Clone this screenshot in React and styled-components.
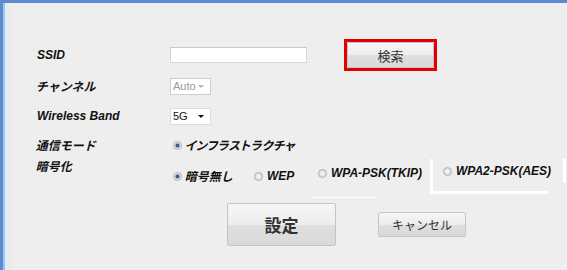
import React from "react";
import styled, { createGlobalStyle } from "styled-components";

const Global = createGlobalStyle`
  html, body { margin: 0; padding: 0; background: #eeeeee; }
  body { font-family: "Liberation Sans", Arial, "Noto Sans CJK JP", sans-serif; }
`;

const Page = styled.div`
  width: 567px;
  height: 270px;
  box-sizing: border-box;
  border-top: 3px solid #5b8cd1;
  background: linear-gradient(
    to right,
    #5b8cd1 0 3px,
    #a9c3e8 3px 5px,
    #e4ecf5 5px 10px,
    #f3ebea 10px 14px,
    #eeeeee 14px
  );
  padding: 36px 0 0 37px;
  overflow: hidden;
`;

const Row = styled.div`
  display: flex;
  align-items: ${(p) => p.$align || "center"};
  height: ${(p) => p.$h}px;
`;

const Label = styled.div`
  width: 133px;
  flex: none;
  font: italic bold 12px/14px "Liberation Sans", Arial, "Noto Sans CJK JP", sans-serif;
  color: #111;
`;

const Jp = styled.span`
  display: inline-block;
  font-family: "Noto Sans CJK JP", sans-serif;
  font-style: normal;
  font-weight: bold;
  transform: skewX(-14deg);
  font-feature-settings: ${(p) => (p.$palt ? '"palt"' : "normal")};
  letter-spacing: ${(p) => (p.$palt ? "0.3px" : "0")};
`;

const TextInput = styled.div`
  width: 135px;
  height: 14px;
  background: #fff;
  border: 1px solid #d6d6d6;
  border-top-color: #c8c8c8;
`;

const RedFrame = styled.div`
  margin-left: 37px;
  width: 87px;
  height: 26px;
  border: 3px solid #e00000;
  display: flex;
`;

const GrayButton = styled.div`
  flex: ${(p) => (p.$w ? "none" : "1")};
  box-sizing: border-box;
  border: 1px solid #c4c4c4;
  background: linear-gradient(to bottom, #f6f6f6 0%, #ededed 50%, #dfdfdf 51%, #d9d9d9 100%);
  display: flex;
  align-items: center;
  justify-content: center;
  font: ${(p) => (p.$bold ? "bold" : "normal")} ${(p) => p.$size || 13}px "Noto Sans CJK JP", sans-serif;
  color: #333;
  width: ${(p) => (p.$w ? p.$w + "px" : "auto")};
  height: ${(p) => (p.$hh ? p.$hh + "px" : "auto")};
  border-radius: 2px;
`;

const Select = styled.div`
  width: 37px;
  height: 15px;
  box-sizing: content-box;
  border: 1px solid ${(p) => (p.$disabled ? "#cfcfcf" : "#dcdcdc")};
  background: #fff;
  display: flex;
  align-items: center;
  justify-content: space-between;
  padding: 0 0 0 2px;
  font: 11px "Liberation Sans", Arial, sans-serif;
  color: ${(p) => (p.$disabled ? "#9a9a9a" : "#111")};
`;

const Caret = styled.span`
  width: 0;
  height: 0;
  margin-right: 6px;
  border-left: 3px solid transparent;
  border-right: 3px solid transparent;
  border-top: 3px solid ${(p) => (p.$disabled ? "#b5b5b5" : "#111")};
`;

const Radio = styled.span`
  width: 7px;
  height: 7px;
  flex: none;
  border-radius: 50%;
  border: 1px solid #a9b3bd;
  background: ${(p) =>
    p.$checked
      ? "radial-gradient(circle, #3f5f8c 0 1.8px, #dfe6ee 2.4px)"
      : "radial-gradient(circle, #f2f2f2 0 1.5px, #dcdcdc 3px)"};
  margin-right: 4px;
`;

const OptionText = styled.span`
  font: italic bold 12px/14px "Liberation Sans", Arial, "Noto Sans CJK JP", sans-serif;
  color: #111;
  white-space: nowrap;
`;

const Options = styled.div`
  display: flex;
  align-items: stretch;
  height: 35px;
`;

const Cell = styled.div`
  position: relative;
  display: flex;
  align-items: flex-start;
  box-sizing: border-box;
  width: ${(p) => p.$w}px;
  padding-left: ${(p) => p.$pl || 0}px;
  padding-top: ${(p) => p.$pt || 0}px;
  border-left: ${(p) => (p.$leftLine ? "3px solid #fff" : "none")};
  border-bottom: ${(p) => (p.$bottomLine ? "3px solid #fff" : "none")};
  ${(p) => p.$short && `
    &::after {
      content: "";
      position: absolute;
      left: -2px;
      bottom: -4px;
      width: 67px;
      height: 1px;
      background: #fff;
    }
  `}
`;

const Stub = styled.div`
  width: 0;
  height: 24px;
  margin-left: 15px;
  border-left: 3px solid #fff;
`;

const OptionItem = styled.div`
  display: flex;
  align-items: center;
  margin-left: ${(p) => p.$ml || 0}px;
`;

const Buttons = styled.div`
  display: flex;
  align-items: center;
  gap: 42px;
  margin: 7px 0 0 190px;
`;

export default function App() {
  return (
    <>
      <Global />
      <Page>
        <Row $h={32}>
          <Label>SSID</Label>
          <TextInput />
          <RedFrame>
            <GrayButton>検索</GrayButton>
          </RedFrame>
        </Row>
        <Row $h={30}>
          <Label>
            <Jp>チャンネル</Jp>
          </Label>
          <Select $disabled>
            Auto
            <Caret $disabled />
          </Select>
        </Row>
        <Row $h={30}>
          <Label>Wireless Band</Label>
          <Select>
            5G
            <Caret />
          </Select>
        </Row>
        <Row $h={28}>
          <Label>
            <Jp>通信モード</Jp>
          </Label>
          <OptionItem $ml={3}>
            <Radio $checked />
            <OptionText>
              <Jp $palt>インフラストラクチャ</Jp>
            </OptionText>
          </OptionItem>
        </Row>
        <Row $h={37} $align="flex-start">
          <Label>
            <Jp>暗号化</Jp>
          </Label>
          <Options>
            <Cell $w={80} $pl={3} $pt={10}>
              <OptionItem>
                <Radio $checked />
                <OptionText>
                  <Jp>暗号無し</Jp>
                </OptionText>
              </OptionItem>
            </Cell>
            <Cell $w={62} $pl={4} $pt={10}>
              <OptionItem>
                <Radio />
                <OptionText>WEP</OptionText>
              </OptionItem>
            </Cell>
            <Cell $w={118} $pl={6} $pt={7} $short>
              <OptionItem>
                <Radio />
                <OptionText>WPA-PSK(TKIP)</OptionText>
              </OptionItem>
            </Cell>
            <Cell $w={118} $pl={10} $pt={5} $leftLine $bottomLine>
              <OptionItem>
                <Radio />
                <OptionText>WPA2-PSK(AES)</OptionText>
              </OptionItem>
            </Cell>
            <Stub />
          </Options>
        </Row>
        <Buttons>
          <GrayButton $bold $size={17} $w={109} $hh={43}>
            設定
          </GrayButton>
          <GrayButton $size={12} $w={88} $hh={25}>
            キャンセル
          </GrayButton>
        </Buttons>
      </Page>
    </>
  );
}
